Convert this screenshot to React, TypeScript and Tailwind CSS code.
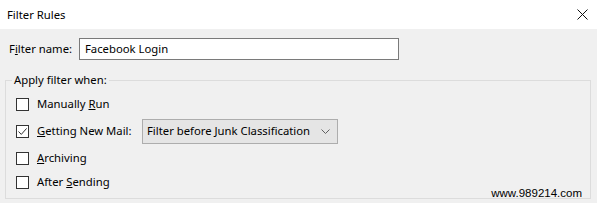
import React from 'react';

function Check({checked}: {checked?: boolean}) {
  return (
    <span className="w-[13px] h-[13px] border border-[#333333] bg-white flex items-center justify-center shrink-0">
      {checked && (
        <svg width="11" height="11" viewBox="0 0 11 11" fill="none">
          <path d="M1.5 5.5 L4.3 8.4 L9.6 2.4" stroke="#333333" strokeWidth="1" />
        </svg>
      )}
    </span>
  );
}

function Row({children, checked, h = 'h-[27px]'}: {children: React.ReactNode; checked?: boolean; h?: string}) {
  return (
    <div className={`flex items-center ${h}`}>
      <Check checked={checked} />
      <div className="ml-[8px] flex items-center">{children}</div>
    </div>
  );
}

export default function App() {
  return (
    <div
      className="w-[597px] h-[203px] bg-[#f0f0f0] relative overflow-hidden text-[11.3px] text-black"
      style={{fontFamily: '"Noto Sans", "Open Sans", sans-serif'}}
    >
      <div className="h-[29px] bg-white flex items-center justify-between pl-[7px] pr-[9px]">
        <span className="leading-none">Filter Rules</span>
        <svg width="11" height="11" viewBox="0 0 11 11">
          <path d="M0.5 0.5 L10.5 10.5 M10.5 0.5 L0.5 10.5" stroke="#111111" strokeWidth="1" />
        </svg>
      </div>

      <div className="flex items-center pl-[9px] mt-[9px]">
        <span className="w-[70px]">
          F<span className="underline underline-offset-1">i</span>lter name:
        </span>
        <div className="w-[320px] h-[22px] border border-[#7a7a7a] bg-white flex items-center pl-[5px]">
          Facebook Login
        </div>
      </div>

      <fieldset className="ml-[5px] w-[586px] h-[127px] mt-[12px] border border-[#dcdcdc] px-0">
        <legend className="ml-[6px] px-[2px] leading-[16px]">Apply filter when:</legend>
        <div className="flex flex-col pl-[10px] pt-[3px]">
          <Row>
            Manually <span className="underline underline-offset-1 ml-[3px]">R</span>un
          </Row>
          <Row checked>
            <span className="w-[105px]">
              <span className="underline underline-offset-1">G</span>etting New Mail:
            </span>
            <div className="w-[196px] h-[25px] border border-[#adadad] bg-[#e5e5e5] flex items-center justify-between pl-[4px] pr-[7px]">
              <span>Filter before Junk Classification</span>
              <svg width="9" height="6" viewBox="0 0 9 6">
                <path d="M0.5 0.5 L4.5 4.5 L8.5 0.5" stroke="#606060" strokeWidth="1" fill="none" />
              </svg>
            </div>
          </Row>
          <Row>
            <span className="underline underline-offset-1">A</span>rchiving
          </Row>
          <Row h="h-[20px]">
            After <span className="underline underline-offset-1 ml-[3px]">S</span>ending
          </Row>
        </div>
      </fieldset>

      <span
        className="absolute right-[15px] bottom-[4px] text-[11.5px] leading-none text-black"
        style={{fontFamily: '"Liberation Sans", Arial, sans-serif'}}
      >
        www.989214.com
      </span>
    </div>
  );
}
